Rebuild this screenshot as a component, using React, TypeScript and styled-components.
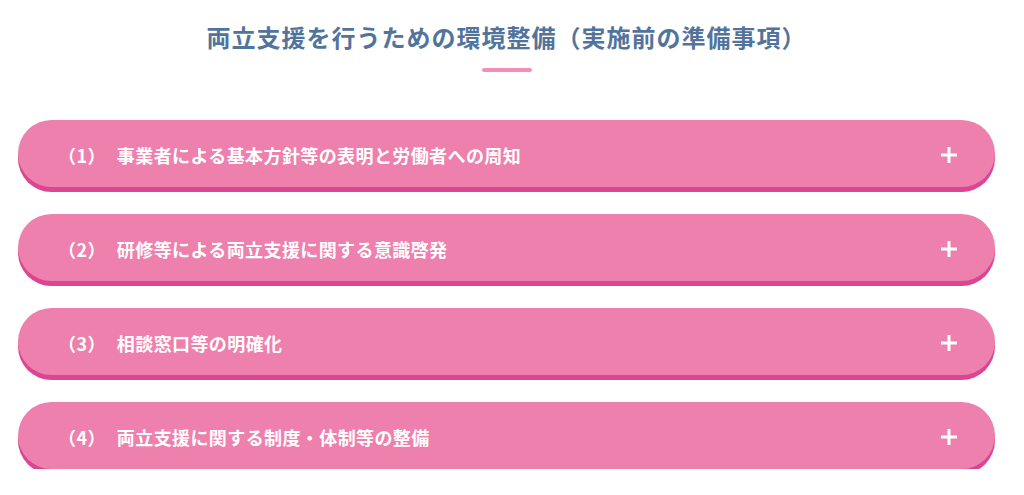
import React from "react";
import styled, { createGlobalStyle } from "styled-components";

const GlobalStyle = createGlobalStyle`
  html, body { margin: 0; padding: 0; background: #ffffff; }
  body { font-family: "Noto Sans CJK JP", "Noto Sans", sans-serif; }
`;

const Page = styled.div`
  width: 977px;
  margin-left: 18px;
  padding-top: 19px;
  display: flex;
  flex-direction: column;
  align-items: stretch;
`;

const Header = styled.header`
  display: flex;
  flex-direction: column;
  align-items: center;
  margin-bottom: 48px;
`;

const Title = styled.h2`
  margin: 0;
  font-family: "Noto Sans CJK JP", sans-serif;
  font-weight: 700;
  font-size: 24px;
  line-height: 36px;
  letter-spacing: 1px;
  color: #52749c;
  text-align: center;
`;

const Underline = styled.span`
  display: block;
  width: 50px;
  height: 4px;
  margin-top: 13px;
  border-radius: 2px;
  background: #f38ebb;
`;

const List = styled.div`
  display: flex;
  flex-direction: column;
  gap: 27px;
`;

const Item = styled.button`
  display: flex;
  align-items: center;
  justify-content: space-between;
  height: 67px;
  width: 100%;
  padding: 0 38px 0 40px;
  border: none;
  border-radius: 34px;
  background: #ee80ad;
  box-shadow: 0 5px 0 #dc4592;
  cursor: pointer;
  box-sizing: border-box;
  font-family: "Noto Sans CJK JP", sans-serif;
  color: #ffffff;
`;

const Label = styled.span`
  display: flex;
  align-items: center;
  font-weight: 700;
  font-size: 18px;
  line-height: 1;
  letter-spacing: 0.4px;
  padding-top: 2px;
`;

const Num = styled.span`
  margin-right: 11px;
`;

const Plus = styled.svg`
  width: 16px;
  height: 16px;
  flex: none;
  margin-top: 2px;
`;

const items = [
  "事業者による基本方針等の表明と労働者への周知",
  "研修等による両立支援に関する意識啓発",
  "相談窓口等の明確化",
  "両立支援に関する制度・体制等の整備",
];

export default function App() {
  return (
    <>
      <GlobalStyle />
      <Page>
        <Header>
          <Title>両立支援を行うための環境整備（実施前の準備事項）</Title>
          <Underline />
        </Header>
        <List>
          {items.map((t, i) => (
            <Item key={i} type="button">
              <Label>
                <Num>（{i + 1}）</Num>
                {t}
              </Label>
              <Plus viewBox="0 0 16 16" aria-hidden="true">
                <rect x="6.5" y="0" width="3" height="16" fill="#ffffff" />
                <rect x="0" y="6.5" width="16" height="3" fill="#ffffff" />
              </Plus>
            </Item>
          ))}
        </List>
      </Page>
    </>
  );
}
